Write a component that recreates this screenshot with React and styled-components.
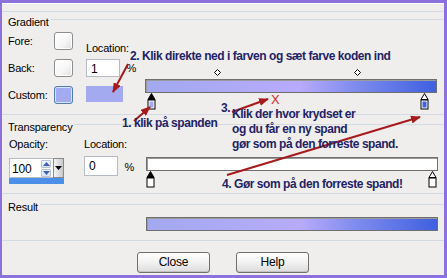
import React from "react";
import styled, { createGlobalStyle } from "styled-components";

const GlobalStyle = createGlobalStyle`
  html, body { margin: 0; padding: 0; }
  body {
    font-family: "Liberation Sans", Arial, sans-serif;
    background: #efeeed;
  }
`;

const BAR_GRADIENT =
  "linear-gradient(90deg, #a2a9ef 0%, #aeaaf6 30%, #b8aafb 53%, #7f8cee 72%, #3f60e0 100%)";

const gradientStops = [
  { left: 2, fill: "#a2a9ef", selected: true },
  { left: 95.5, fill: "#3f60e0", selected: false },
];
const diamonds = [24.5, 72.5];
const opacityStops = [
  { left: 1.5, fill: "#ffffff", selected: true },
  { left: 98, fill: "#ffffff", selected: false },
];

function Stop({ fill, selected }) {
  return (
    <svg width="9" height="17" viewBox="0 0 9 17">
      <path
        d="M4.5 0.5 L1 6.5 L8 6.5 Z"
        fill={selected ? "#000" : "#fff"}
        stroke="#000"
        strokeWidth="1"
      />
      <rect x="0.5" y="6.5" width="8" height="10" fill="#000" />
      <rect x="1.5" y="7.5" width="6" height="8" fill="#fff" />
      <rect x="2.5" y="8.5" width="4" height="6" fill={fill} />
    </svg>
  );
}

function Diamond() {
  return (
    <svg width="7" height="7" viewBox="0 0 7 7">
      <path d="M3.5 0.5 L6.5 3.5 L3.5 6.5 L0.5 3.5 Z" fill="#fff" stroke="#000" strokeWidth="1" />
    </svg>
  );
}

function Arrows() {
  const lines = [
    [128, 64, 113, 92],
    [134, 121, 150, 107],
    [232, 112, 268, 99],
    [227, 175, 420, 117],
  ];
  return (
    <ArrowLayer width="447" height="278" viewBox="0 0 447 278">
      <defs>
        <marker id="head" markerWidth="10" markerHeight="8" refX="9" refY="4" orient="auto" markerUnits="userSpaceOnUse">
          <path d="M0 0 L10 4 L0 8 Z" fill="#a8191c" />
        </marker>
      </defs>
      {lines.map(([x1, y1, x2, y2], i) => (
        <line key={i} x1={x1} y1={y1} x2={x2} y2={y2} stroke="#a8191c" strokeWidth="2" markerEnd="url(#head)" />
      ))}
    </ArrowLayer>
  );
}

export default function App() {
  return (
    <>
      <GlobalStyle />
      <Window>
        <Section $h={103} $top={8}>
          <Header $top={3}>
            <HeaderLabel>Gradient</HeaderLabel>
            <HeaderLine />
          </Header>
          <Body>
            <ColorColumn>
              <ColorRow>
                <RowLabel>Fore:</RowLabel>
                <Swatch />
              </ColorRow>
              <ColorRow>
                <RowLabel>Back:</RowLabel>
                <Swatch />
              </ColorRow>
              <ColorRow>
                <RowLabel>Custom:</RowLabel>
                <Swatch $custom />
              </ColorRow>
            </ColorColumn>
            <LocationColumn $top={12}>
              <FieldLabel>Location:</FieldLabel>
              <InputRow $top={4}>
                <TextInput $h={18}>1</TextInput>
                <Percent>%</Percent>
              </InputRow>
              <ColorPreview />
            </LocationColumn>
            <BarColumn $top={50}>
              <Track>
                <Bar $bg={BAR_GRADIENT} />
                {diamonds.map((d) => (
                  <DiamondMark key={d} style={{ left: `${d}%` }}>
                    <Diamond />
                  </DiamondMark>
                ))}
                {gradientStops.map((s) => (
                  <StopMark key={s.left} style={{ left: `${s.left}%` }}>
                    <Stop fill={s.fill} selected={s.selected} />
                  </StopMark>
                ))}
              </Track>
            </BarColumn>
          </Body>
        </Section>

        <Section $h={79}>
          <Header $top={5}>
            <HeaderLabel>Transparency</HeaderLabel>
            <HeaderLine />
          </Header>
          <Body $top={3}>
            <OpacityColumn>
              <FieldLabel>Opacity:</FieldLabel>
              <Combo>
                <ComboField>
                  <ComboValue>100</ComboValue>
                  <Spin>
                    <SpinButton>
                      <svg width="7" height="4" viewBox="0 0 7 4"><path d="M3.5 0 L7 4 L0 4 Z" fill="#3f5fbf" /></svg>
                    </SpinButton>
                    <SpinButton>
                      <svg width="7" height="4" viewBox="0 0 7 4"><path d="M0 0 L7 0 L3.5 4 Z" fill="#3f5fbf" /></svg>
                    </SpinButton>
                  </Spin>
                </ComboField>
                <DropButton>
                  <svg width="7" height="4" viewBox="0 0 7 4"><path d="M0 0 L7 0 L3.5 4 Z" fill="#000" /></svg>
                </DropButton>
              </Combo>
              <ListHighlight />
            </OpacityColumn>
            <LocationColumn $top={0} $left={17}>
              <FieldLabel>Location:</FieldLabel>
              <InputRow $top={5}>
                <TextInput $h={20}>0</TextInput>
                <Percent>%</Percent>
              </InputRow>
            </LocationColumn>
            <BarColumn $top={20} $left={12}>
              <Track>
                <Bar $bg="#ffffff" />
                {opacityStops.map((s) => (
                  <StopMark key={s.left} style={{ left: `${s.left}%` }}>
                    <Stop fill={s.fill} selected={s.selected} />
                  </StopMark>
                ))}
              </Track>
            </BarColumn>
          </Body>
        </Section>

        <Section $h={47}>
          <Header $top={6}>
            <HeaderLabel>Result</HeaderLabel>
            <HeaderLine />
          </Header>
          <ResultRow>
            <Bar $bg={BAR_GRADIENT} />
          </ResultRow>
        </Section>

        <ButtonBar>
          <Button>Close</Button>
          <Button>Help</Button>
        </ButtonBar>

        <Overlay>
          <Arrows />
          <Note $x={130} $y={49}>2. Klik direkte ned i farven og sæt farve koden ind</Note>
          <Note $x={122} $y={116}>1. klik på spanden</Note>
          <Note $x={221} $y={101}>3.</Note>
          <Cross $x={271} $y={92}>X</Cross>
          <Note $x={232} $y={107}>
            Klik der hvor krydset er
            <br />
            og du får en ny spand
            <br />
            gør som på den forreste spand.
          </Note>
          <Note $x={222} $y={177}>4. Gør som på den forreste spand!</Note>
        </Overlay>
      </Window>
    </>
  );
}

const Window = styled.div`
  position: relative;
  box-sizing: border-box;
  width: 447px;
  height: 278px;
  overflow: hidden;
  background: #efeeed;
  border: 3px solid #8c70dc;
  border-left-width: 2px;
  box-shadow: inset 0 1px 0 #ffffff;
  display: flex;
  flex-direction: column;
  font-size: 11px;
  letter-spacing: -0.2px;
  color: #000;
`;

const Section = styled.section`
  box-sizing: border-box;
  height: ${(p) => p.$h}px;
  margin-top: ${(p) => p.$top || 0}px;
  border-top: 1px solid #d3dae3;
  display: flex;
  flex-direction: column;
  flex-shrink: 0;
`;

const Header = styled.div`
  display: flex;
  align-items: flex-start;
  margin-top: ${(p) => p.$top}px;
  padding-left: 6px;
  line-height: 14px;
`;

const HeaderLabel = styled.span`
  padding-right: 2px;
`;

const HeaderLine = styled.div`
  flex: 1;
  height: 1px;
  margin-top: 4px;
  background: #d3dae3;
`;

const Body = styled.div`
  display: flex;
  align-items: flex-start;
  margin-top: ${(p) => p.$top || 0}px;
  padding-left: 6px;
`;

const ColorColumn = styled.div`
  display: flex;
  flex-direction: column;
  gap: 9px;
  padding-top: 3px;
`;

const ColorRow = styled.div`
  display: flex;
  align-items: center;
`;

const RowLabel = styled.span`
  width: 46px;
  line-height: 14px;
`;

const Swatch = styled.div`
  box-sizing: border-box;
  width: 19px;
  height: 18px;
  border-radius: 3px;
  border: 1px solid ${(p) => (p.$custom ? "#4f7cbd" : "#8d8d8d")};
  background: ${(p) =>
    p.$custom ? "#a3aaf0" : "linear-gradient(135deg, #ffffff 0%, #f7f7f7 55%, #dedede 100%)"};
  box-shadow: inset 0 0 0 1px ${(p) => (p.$custom ? "#d8e4f6" : "#ffffff")};
`;

const LocationColumn = styled.div`
  display: flex;
  flex-direction: column;
  width: 50px;
  margin-left: ${(p) => (p.$left === undefined ? 13 : p.$left)}px;
  padding-top: ${(p) => p.$top}px;
`;

const FieldLabel = styled.span`
  line-height: 14px;
`;

const InputRow = styled.div`
  display: flex;
  align-items: flex-end;
  gap: 6px;
  margin-top: ${(p) => p.$top}px;
`;

const TextInput = styled.div`
  box-sizing: border-box;
  width: 37px;
  height: ${(p) => p.$h}px;
  border: 1px solid #b5bcc6;
  background: #fff;
  padding: 2px 0 0 4px;
  font-size: 12px;
  line-height: 14px;
`;

const Percent = styled.span`
  line-height: 14px;
  margin-bottom: 2px;
`;

const ColorPreview = styled.div`
  width: 37px;
  height: 16px;
  margin-top: 9px;
  background: #a3aaf0;
`;

const BarColumn = styled.div`
  margin-left: ${(p) => (p.$left === undefined ? 9 : p.$left)}px;
  width: 292px;
  padding-top: ${(p) => p.$top}px;
`;

const Track = styled.div`
  position: relative;
`;

const Bar = styled.div`
  box-sizing: border-box;
  width: 292px;
  height: 14px;
  border: 1px solid #6f6f6f;
  box-shadow: inset 1px 1px 0 #9a9a9a;
  background: ${(p) => p.$bg};
`;

const DiamondMark = styled.div`
  position: absolute;
  top: -10px;
  margin-left: -3px;
  line-height: 0;
`;

const StopMark = styled.div`
  position: absolute;
  top: 14px;
  margin-left: -4px;
  line-height: 0;
`;

const OpacityColumn = styled.div`
  display: flex;
  flex-direction: column;
  width: 58px;
  padding-left: 1px;
`;

const Combo = styled.div`
  display: flex;
  margin-top: 7px;
  height: 20px;
`;

const ComboField = styled.div`
  box-sizing: border-box;
  display: flex;
  justify-content: space-between;
  width: 44px;
  height: 20px;
  border: 1px solid #b5bcc6;
  border-right: none;
  background: #fff;
`;

const ComboValue = styled.span`
  padding: 3px 0 0 2px;
  font-size: 12px;
  line-height: 14px;
`;

const Spin = styled.div`
  display: flex;
  flex-direction: column;
  gap: 1px;
  padding: 1px 2px 0 0;
`;

const SpinButton = styled.div`
  box-sizing: border-box;
  width: 10px;
  height: 8px;
  display: flex;
  align-items: center;
  justify-content: center;
  border: 1px solid #b8c4d6;
  border-radius: 1px;
  background: linear-gradient(#f1f5fb, #d9e2ef);
`;

const DropButton = styled.div`
  box-sizing: border-box;
  width: 11px;
  height: 20px;
  display: flex;
  align-items: center;
  justify-content: center;
  border: 1px solid #8a8a8a;
  background: linear-gradient(90deg, #f4f4f4, #c9c9c9);
`;

const ListHighlight = styled.div`
  width: 55px;
  height: 6px;
  background: #4b8fe8;
`;

const ResultRow = styled.div`
  padding-left: 144px;
  margin-top: 3px;
`;

const ButtonBar = styled.div`
  box-sizing: border-box;
  flex: 1;
  display: flex;
  justify-content: center;
  gap: 26px;
  padding-top: 11px;
  border-top: 1px solid #d3dae3;
`;

const Button = styled.div`
  box-sizing: border-box;
  width: 73px;
  height: 21px;
  border: 1px solid #707070;
  border-radius: 3px;
  background: linear-gradient(#ffffff 0%, #f3f3f3 45%, #dcdcdc 100%);
  box-shadow: inset 0 -1px 0 #c4c4c4;
  font-size: 12px;
  line-height: 19px;
  text-align: center;
`;

const Overlay = styled.div`
  position: absolute;
  top: -3px;
  left: -2px;
  width: 447px;
  height: 278px;
  pointer-events: none;
`;

const ArrowLayer = styled.svg`
  position: absolute;
  top: 0;
  left: 0;
`;

const Note = styled.div`
  position: absolute;
  left: ${(p) => p.$x}px;
  top: ${(p) => p.$y}px;
  font-size: 12px;
  font-weight: bold;
  line-height: 15px;
  letter-spacing: -0.45px;
  color: #1f2365;
  white-space: nowrap;
`;

const Cross = styled(Note)`
  color: #d02a2a;
  font-weight: normal;
  font-size: 13px;
  letter-spacing: 0;
`;
